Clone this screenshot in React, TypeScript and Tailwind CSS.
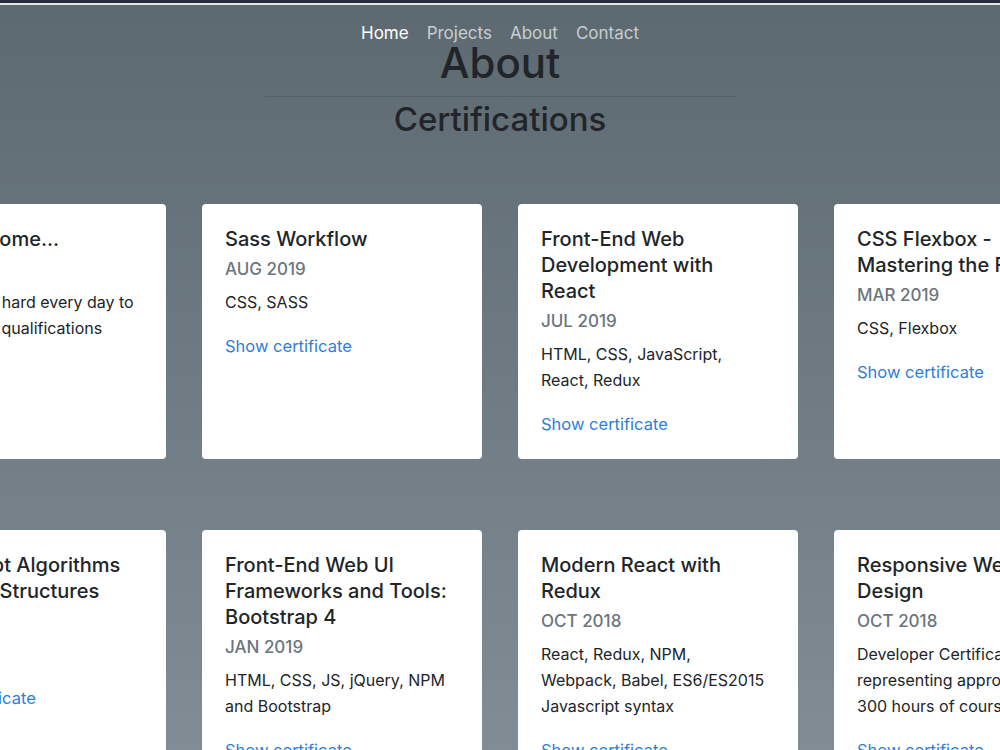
interface Cert {
  title: string[]
  date: string
  body: string[]
  link?: boolean
}

const rows: Cert[][] = [
  [
    {
      title: ['More to come...'],
      date: '2019',
      body: ["I'm working hard every day to", 'improve my qualifications'],
    },
    { title: ['Sass Workflow'], date: 'AUG 2019', body: ['CSS, SASS'], link: true },
    {
      title: ['Front-End Web', 'Development with', 'React'],
      date: 'JUL 2019',
      body: ['HTML, CSS, JavaScript,', 'React, Redux'],
      link: true,
    },
    {
      title: ['CSS Flexbox -', 'Mastering the Flexbox'],
      date: 'MAR 2019',
      body: ['CSS, Flexbox'],
      link: true,
    },
  ],
  [
    {
      title: ['JavaScript Algorithms', 'and Data Structures'],
      date: 'DEC 2018',
      body: ['JavaScript'],
      link: true,
    },
    {
      title: ['Front-End Web UI', 'Frameworks and Tools:', 'Bootstrap 4'],
      date: 'JAN 2019',
      body: ['HTML, CSS, JS, jQuery, NPM', 'and Bootstrap'],
      link: true,
    },
    {
      title: ['Modern React with', 'Redux'],
      date: 'OCT 2018',
      body: ['React, Redux, NPM,', 'Webpack, Babel, ES6/ES2015', 'Javascript syntax'],
      link: true,
    },
    {
      title: ['Responsive Web', 'Design'],
      date: 'OCT 2018',
      body: ['Developer Certification,', 'representing approximately', '300 hours of coursework'],
      link: true,
    },
  ],
]

function CertCard({ cert }: { cert: Cert }) {
  return (
    <div className="w-[280px] shrink-0 rounded-[4px] bg-white px-[23px] py-[22px]">
      <h5 className="text-[20px] font-medium leading-[26px] text-[#212529] whitespace-nowrap">
        {cert.title.map((l, i) => (
          <div key={i}>{l}</div>
        ))}
      </h5>
      <div className="mt-[4px] text-[17px] font-medium leading-[26px] text-[#6c757d]">{cert.date}</div>
      <div className="mt-[7px] text-[16px] leading-[26px] text-[#212529] whitespace-nowrap">
        {cert.body.map((l, i) => (
          <div key={i}>{l}</div>
        ))}
      </div>
      {cert.link && (
        <a href="#" className="mt-[18px] block text-[16.5px] leading-[26px] text-[#2f7ed8]">
          Show certificate
        </a>
      )}
    </div>
  )
}

export default function App() {
  return (
    <div
      className="relative h-[750px] w-full overflow-hidden bg-gradient-to-b from-[#5d6970] to-[#818c94]"
      style={{ fontFamily: 'Inter, "Liberation Sans", Arial, sans-serif' }}
    >
      {/* Top edge */}
      <div className="h-[3px] bg-[#2b2c3b]" />
      <div className="h-[2px] bg-[#e4e6ec]" />

      {/* Nav */}
      <nav className="mt-[18px] flex justify-center gap-[18px] text-[17px] leading-[20px]">
        <a href="#" className="text-white">Home</a>
        <a href="#" className="text-[#c8cdd1]">Projects</a>
        <a href="#" className="text-[#c8cdd1]">About</a>
        <a href="#" className="text-[#c8cdd1]">Contact</a>
      </nav>

      {/* Header */}
      <h1 className="text-center text-[42px] font-medium leading-[40px] text-[#212529]">About</h1>
      <div className="mx-auto mt-[13px] h-px w-[471px] bg-[#56616a]" />
      <h2 className="mt-[2px] text-center text-[33px] font-medium leading-[40px] text-[#212529]">
        Certifications
      </h2>

      {/* Cards */}
      <div className="mt-[65px] flex flex-col gap-[71px]">
        {rows.map((row, i) => (
          <div key={i} className="flex justify-center gap-[36px]">
            {row.map((c, j) => (
              <CertCard key={j} cert={c} />
            ))}
          </div>
        ))}
      </div>
    </div>
  )
}
